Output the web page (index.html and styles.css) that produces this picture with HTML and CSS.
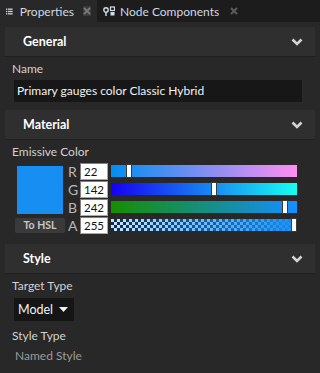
FILE: index.html
```html
<!doctype html>
<html lang="en">
  <head>
    <meta charset="utf-8">
    <title>Properties</title>
    <link rel="stylesheet" href="styles.css">
  </head>
  <body>
    <div class="tabs">
      <div class="tab active">
        <svg class="tab-icon" width="10" height="9" viewBox="0 0 10 9">
          <rect x="0" y="0" width="2" height="2" fill="#c9d2de"/>
          <rect x="3" y="0" width="7" height="2" fill="#c9d2de"/>
          <rect x="0" y="3.5" width="2" height="2" fill="#c9d2de"/>
          <rect x="3" y="3.5" width="7" height="2" fill="#c9d2de"/>
          <rect x="0" y="7" width="2" height="2" fill="#c9d2de"/>
          <rect x="3" y="7" width="7" height="2" fill="#c9d2de"/>
        </svg>
        <span class="tab-title">Properties</span>
        <span class="tab-close boxed">
          <svg width="8" height="8" viewBox="0 0 8 8"><path d="M1 1 L7 7 M7 1 L1 7" stroke="#777" stroke-width="2"/></svg>
        </span>
      </div>
      <div class="tab">
        <svg class="tab-icon" width="12" height="11" viewBox="0 0 12 11">
          <circle cx="3" cy="4" r="2.2" fill="none" stroke="#d6dde8" stroke-width="1.4"/>
          <rect x="2.3" y="6" width="1.4" height="4" fill="#d6dde8"/>
          <rect x="7.5" y="1" width="4" height="3.5" fill="none" stroke="#d6dde8" stroke-width="1.2"/>
          <rect x="7.5" y="6" width="4" height="3.5" fill="#d6dde8"/>
        </svg>
        <span class="tab-title">Node Components</span>
        <span class="tab-close">
          <svg width="8" height="8" viewBox="0 0 8 8"><path d="M1 1 L7 7 M7 1 L1 7" stroke="#5c5c5c" stroke-width="2"/></svg>
        </span>
      </div>
    </div>

    <div class="panel">
      <div class="section">
        <div class="section-header">
          <span>General</span>
          <svg class="chevron" width="12" height="8" viewBox="0 0 12 8"><path d="M1.5 1.5 L6 6 L10.5 1.5" fill="none" stroke="#d4d4d4" stroke-width="2.6"/></svg>
        </div>
        <div class="section-body">
          <div class="label">Name</div>
          <div class="text-field">Primary gauges color Classic Hybrid</div>
        </div>
      </div>

      <div class="section">
        <div class="section-header">
          <span>Material</span>
          <svg class="chevron" width="12" height="8" viewBox="0 0 12 8"><path d="M1.5 1.5 L6 6 L10.5 1.5" fill="none" stroke="#d4d4d4" stroke-width="2.6"/></svg>
        </div>
        <div class="section-body">
          <div class="label">Emissive Color</div>
          <div class="color-editor">
            <div class="swatch-col">
              <div class="swatch"></div>
              <div class="hsl-button">To HSL</div>
            </div>
            <div class="channels">
              <div class="channel">
                <span class="ch-letter">R</span>
                <span class="ch-value">22</span>
                <div class="ch-bar bar-r"><span class="thumb" style="left: 15px"></span></div>
              </div>
              <div class="channel">
                <span class="ch-letter">G</span>
                <span class="ch-value">142</span>
                <div class="ch-bar bar-g"><span class="thumb" style="left: 100px"></span></div>
              </div>
              <div class="channel">
                <span class="ch-letter">B</span>
                <span class="ch-value">242</span>
                <div class="ch-bar bar-b"><span class="thumb" style="left: 171px"></span></div>
              </div>
              <div class="channel">
                <span class="ch-letter">A</span>
                <span class="ch-value">255</span>
                <div class="ch-bar bar-a"><span class="thumb" style="left: 180px"></span></div>
              </div>
            </div>
          </div>
        </div>
      </div>

      <div class="section">
        <div class="section-header">
          <span>Style</span>
          <svg class="chevron" width="12" height="8" viewBox="0 0 12 8"><path d="M1.5 1.5 L6 6 L10.5 1.5" fill="none" stroke="#d4d4d4" stroke-width="2.6"/></svg>
        </div>
        <div class="section-body">
          <div class="label">Target Type</div>
          <div class="dropdown">
            <span>Model</span>
            <svg width="9" height="5" viewBox="0 0 9 5"><path d="M0 0 L9 0 L4.5 5 Z" fill="#f0f0f0"/></svg>
          </div>
          <div class="label style-type">Style Type</div>
          <div class="value-muted">Named Style</div>
        </div>
      </div>
    </div>
  </body>
</html>
```

FILE: styles.css
```css
body {
  margin: 0;
  background: #282828;
  font-family: Lato, "Noto Sans", sans-serif;
  font-size: 12px;
  color: #d2d2d2;
  width: 320px;
  height: 373px;
  overflow: hidden;
}

/* tab strip */
.tabs {
  display: flex;
  height: 22px;
  background: #1c1c1c;
}

.tab {
  display: flex;
  align-items: center;
  height: 22px;
  padding: 0 6px;
  color: #cfd8e4;
}

.tab.active {
  background: #282828;
  width: 85px;
}

.tab-icon {
  margin-right: 7px;
}

.tab + .tab .tab-icon {
  margin-right: 5px;
}

.tab-title {
  font-size: 12px;
  white-space: nowrap;
}

.tab-close {
  display: flex;
  align-items: center;
  justify-content: center;
  width: 10px;
  height: 10px;
  margin-left: 10px;
}

.tab-close.boxed {
  background: #3a3a3a;
  margin-left: 9px;
}

/* sections */
.panel {
  padding: 5px 5px 0 5px;
  width: 310px;
}

.section-header {
  display: flex;
  align-items: center;
  justify-content: space-between;
  height: 29px;
  padding: 0 12px 0 18px;
  background: #2f2f2f;
  border-bottom: 1px solid #1f1f1f;
  font-weight: bold;
  color: #fff;
  font-size: 12.5px;
}

.chevron {
  margin-top: 1px;
}

.section-body {
  padding: 3px 13px 8px 7px;
}

.label {
  height: 17px;
  line-height: 17px;
}

.text-field {
  margin: 3px 0 0 2px;
  height: 22px;
  line-height: 22px;
  background: #171717;
  color: #f2f2f2;
  padding-left: 3px;
}

/* color editor */
.color-editor {
  display: flex;
  margin-top: 2px;
  height: 74px;
}

.swatch-col {
  display: flex;
  flex-direction: column;
  align-items: center;
  width: 50px;
  margin-left: 3px;
}

.swatch {
  width: 46px;
  height: 48px;
  margin-top: 4px;
  background: #168ef2;
}

.hsl-button {
  width: 50px;
  height: 15px;
  margin-top: 4px;
  line-height: 15px;
  text-align: center;
  background: #3a3a3a;
  border-radius: 2px;
  font-size: 10.5px;
  font-weight: bold;
  color: #c8c8c8;
}

.channels {
  display: flex;
  flex-direction: column;
  margin-left: 3px;
}

.channel {
  display: flex;
  align-items: center;
  height: 18px;
}

.ch-letter {
  width: 12px;
  font-size: 14px;
  color: #b8b8b8;
  text-align: left;
}

.ch-value {
  box-sizing: border-box;
  width: 28px;
  height: 17px;
  line-height: 15px;
  padding-left: 3px;
  background: #fff;
  border: 1px solid #a8a8a8;
  border-left-color: #808080;
  border-top-color: #808080;
  color: #111;
  font-size: 11.5px;
}

.ch-bar {
  position: relative;
  width: 186px;
  height: 12px;
  margin-left: 3px;
}

.bar-r { background: linear-gradient(to right, rgb(0,142,242), rgb(255,142,242)); }
.bar-g { background: linear-gradient(to right, rgb(22,0,242), rgb(22,255,242)); }
.bar-b { background: linear-gradient(to right, rgb(22,142,0), rgb(22,142,255)); }

.bar-a {
  background:
    linear-gradient(to right, rgba(22,142,242,0.15), rgba(22,142,242,1)),
    conic-gradient(#0d1a2a 25%, #e8f4ff 0 50%, #0d1a2a 0 75%, #e8f4ff 0) 0 0 / 6px 6px;
}

.thumb {
  position: absolute;
  top: -1px;
  width: 4px;
  height: 12px;
  background: #fff;
  border: 1px solid #3a3a3a;
}

/* style section */
.dropdown {
  display: inline-flex;
  align-items: center;
  gap: 6px;
  height: 23px;
  margin: 4px 0 0 2px;
  padding: 0 6px 0 4px;
  background: #151515;
  color: #f2f2f2;
  font-size: 12.5px;
}

.style-type {
  margin-top: 6px;
}

.value-muted {
  margin: 3px 0 0 3px;
  height: 17px;
  line-height: 17px;
  color: #9c9c9c;
}
```
